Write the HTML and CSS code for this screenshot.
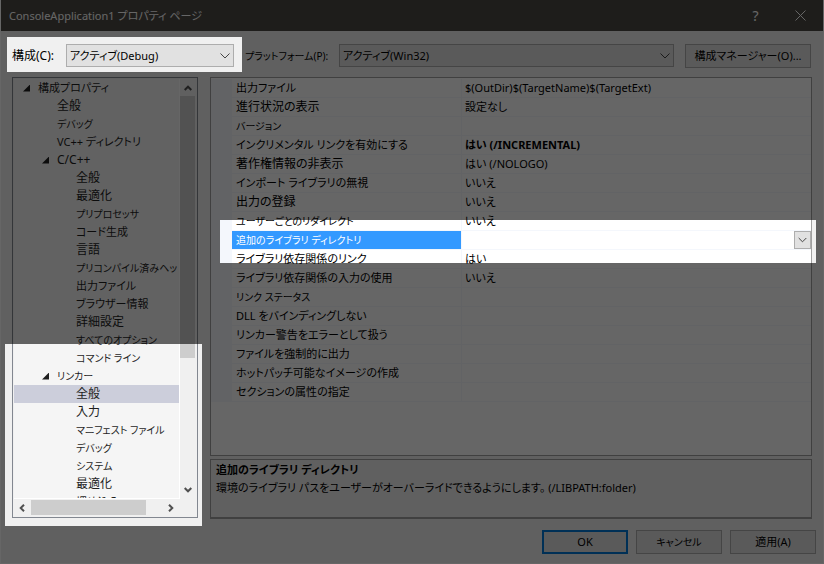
FILE: index.html
```html
<!DOCTYPE html>
<html lang="ja">
<head>
<meta charset="utf-8">
<title>ConsoleApplication1 プロパティ ページ</title>
<link rel="stylesheet" href="styles.css">
</head>
<body>
<div class="window">
  <header class="titlebar">
    <h1 class="title">ConsoleApplication1 プロパティ ページ</h1>
    <button class="caption-button" type="button" aria-label="ヘルプ">?</button>
    <button class="caption-button" type="button" aria-label="閉じる"><svg width="11" height="11" viewBox="0 0 11 11"><path d="M.5.5l10 10M10.5.5l-10 10"/></svg></button>
  </header>

  <div class="toolbar">
    <label class="config-label kanji" for="config">構成(C):</label>
    <div class="combo config-combo">
      <select id="config"><option>アクティブ(Debug)</option></select>
      <svg class="chevron" width="10" height="6" viewBox="0 0 10 6"><path d="M.5.5L5 5 9.5.5"/></svg>
    </div>
    <label class="platform-label kana" for="platform">プラットフォーム(P):</label>
    <div class="combo platform-combo">
      <select id="platform"><option>アクティブ(Win32)</option></select>
      <svg class="chevron" width="10" height="6" viewBox="0 0 10 6"><path d="M.5.5L5 5 9.5.5"/></svg>
    </div>
    <button class="button manager" type="button">構成マネージャー(O)...</button>
  </div>

  <main class="main">
    <nav class="tree-box">
      <ul class="tree">
        <li class="branch">構成プロパティ</li>
        <li class="level1 kanji">全般</li>
        <li class="level1 kana">デバッグ</li>
        <li class="level1">VC++ ディレクトリ</li>
        <li class="level1 branch kanji">C/C++</li>
        <li class="level2 kanji">全般</li>
        <li class="level2 kanji">最適化</li>
        <li class="level2 kana">プリプロセッサ</li>
        <li class="level2">コード生成</li>
        <li class="level2 kanji">言語</li>
        <li class="level2 kana">プリコンパイル済みヘッ</li>
        <li class="level2">出力ファイル</li>
        <li class="level2">ブラウザー情報</li>
        <li class="level2 kanji">詳細設定</li>
        <li class="level2 kana">すべてのオプション</li>
        <li class="level2 kana">コマンド ライン</li>
        <li class="level1 branch kana">リンカー</li>
        <li class="level2 selected kanji">全般</li>
        <li class="level2 kanji">入力</li>
        <li class="level2 kana">マニフェスト ファイル</li>
        <li class="level2 kana">デバッグ</li>
        <li class="level2 kana">システム</li>
        <li class="level2 kanji">最適化</li>
        <li class="level2">埋め込み IDL</li>
      </ul>
      <div class="scroll-y">
        <svg width="8" height="6" viewBox="0 0 8 6"><path d="M.7 5L4 1.700 7.300 5"/></svg>
        <div class="track-y"><div class="thumb-y"></div></div>
        <svg width="8" height="6" viewBox="0 0 8 6"><path d="M.7 1L4 4.300 7.300 1"/></svg>
      </div>
      <div class="scroll-x">
        <svg width="6" height="8" viewBox="0 0 6 8"><path d="M5 .7L1.700 4 5 7.300"/></svg>
        <div class="track-x"><div class="thumb-x"></div></div>
        <svg width="6" height="8" viewBox="0 0 6 8"><path d="M1 .7L4.300 4 1 7.300"/></svg>
      </div>
    </nav>

    <section class="details">
      <div class="grid-box">
        <table class="grid">
          <tbody>
            <tr><td class="gutter"></td><th scope="row">出力ファイル</th><td>$(OutDir)$(TargetName)$(TargetExt)</td></tr>
            <tr><td class="gutter"></td><th scope="row" class="kanji">進行状況の表示</th><td>設定なし</td></tr>
            <tr><td class="gutter"></td><th scope="row" class="kana">バージョン</th><td></td></tr>
            <tr><td class="gutter"></td><th scope="row">インクリメンタル リンクを有効にする</th><td class="changed">はい (/INCREMENTAL)</td></tr>
            <tr><td class="gutter"></td><th scope="row" class="kanji">著作権情報の非表示</th><td>はい (/NOLOGO)</td></tr>
            <tr><td class="gutter"></td><th scope="row">インポート ライブラリの無視</th><td>いいえ</td></tr>
            <tr><td class="gutter"></td><th scope="row" class="kanji">出力の登録</th><td>いいえ</td></tr>
            <tr><td class="gutter"></td><th scope="row" class="kana">ユーザーごとのリダイレクト</th><td>いいえ</td></tr>
            <tr class="current"><td class="gutter"></td><th scope="row" class="kana">追加のライブラリ ディレクトリ</th><td class="editor"><button class="drop" type="button" aria-label="編集"><svg class="drop-icon" width="9" height="6" viewBox="0 0 9 6"><path d="M.7 1L4.500 4.800 8.300 1"/></svg></button></td></tr>
            <tr><td class="gutter"></td><th scope="row">ライブラリ依存関係のリンク</th><td>はい</td></tr>
            <tr><td class="gutter"></td><th scope="row">ライブラリ依存関係の入力の使用</th><td>いいえ</td></tr>
            <tr><td class="gutter"></td><th scope="row" class="kana">リンク ステータス</th><td></td></tr>
            <tr><td class="gutter"></td><th scope="row">DLL をバインディングしない</th><td></td></tr>
            <tr><td class="gutter"></td><th scope="row">リンカー警告をエラーとして扱う</th><td></td></tr>
            <tr><td class="gutter"></td><th scope="row">ファイルを強制的に出力</th><td></td></tr>
            <tr><td class="gutter"></td><th scope="row">ホットパッチ可能なイメージの作成</th><td></td></tr>
            <tr><td class="gutter"></td><th scope="row">セクションの属性の指定</th><td></td></tr>
          </tbody>
        </table>
      </div>
      <div class="description">
        <h2>追加のライブラリ ディレクトリ</h2>
        <p>環境のライブラリ パスをユーザーがオーバーライドできるようにします。 (/LIBPATH:folder)</p>
      </div>
    </section>
  </main>

  <footer class="footer">
    <button class="button default" type="button">OK</button>
    <button class="button kana" type="button">キャンセル</button>
    <button class="button" type="button">適用(A)</button>
  </footer>
  <div class="shade"></div>
</div>
</body>
</html>
```
FILE: styles.css
```css
* {
  box-sizing: border-box;
}

body {
  margin: 0;
}

body,
button,
select {
  font-family: "Noto Sans", "Noto Sans CJK JP", sans-serif;
  font-size: 11px;
  font-feature-settings: "palt";
  line-height: 18px;
  color: #000;
}

.kanji {
  font-size: 12px;
}

.kana {
  font-size: 10px;
}

svg {
  flex: none;
  fill: none;
  stroke: #444;
}

.window {
  position: relative;
  display: flex;
  flex-direction: column;
  height: 100vh;
  border: 1px solid #666;
  border-top: 0;
  background: #f0f0f0;
  overflow: hidden;
}

/* Dims everything except the three highlighted areas. */
.shade {
  position: absolute;
  inset: 0 -1px -1px;
  background: rgba(0, 0, 0, 0.6);
  pointer-events: none;
  clip-path: polygon(evenodd,
    0 0, 100% 0, 100% 100%, 0 100%, 0 0,
    7px 37px, 242px 37px, 242px 72px, 7px 72px, 7px 37px, 0 0,
    5px 344px, 202px 344px, 202px 526px, 5px 526px, 5px 344px, 0 0,
    220px 220px, calc(100% - 8px) 220px, calc(100% - 8px) 263px, 220px 263px, 220px 220px, 0 0);
}

.titlebar {
  flex: none;
  display: flex;
  align-items: center;
  height: 31px;
  padding-left: 8px;
  background: #4d4a45;
}

.title {
  flex: 1;
  margin: 0;
  font-size: 11px;
  font-weight: 400;
  color: #fff;
}

.caption-button {
  display: flex;
  align-items: center;
  justify-content: center;
  width: 45px;
  height: 31px;
  padding: 0;
  border: 0;
  background: none;
  font-size: 14px;
  color: #fff;
}

.caption-button svg {
  stroke: #fff;
}

.toolbar {
  flex: none;
  display: flex;
  align-items: center;
  padding: 13px 12px 9px 11px;
}

.config-label {
  width: 54px;
}

.combo {
  position: relative;
  height: 24px;
}

.config-combo {
  width: 168px;
}

.platform-label {
  width: 105px;
  padding-left: 11px;
  white-space: nowrap;
}

.platform-combo {
  flex: 1;
}

.combo select {
  display: block;
  width: 100%;
  height: 23px;
  padding: 0 3px;
  border: 1px solid #adadad;
  border-radius: 0;
  background: #e1e1e1;
  appearance: none;
}

.chevron {
  position: absolute;
  top: 9px;
  right: 4px;
  pointer-events: none;
}

.button {
  width: 86px;
  height: 24px;
  padding: 0;
  border: 1px solid #adadad;
  background: #e1e1e1;
  white-space: nowrap;
}

.manager {
  width: 126px;
  margin-left: 11px;
}

.main {
  flex: 1;
  min-height: 0;
  display: grid;
  grid-template-columns: 186px minmax(0, 1fr);
  grid-template-rows: minmax(0, 1fr);
  gap: 12px;
  padding: 0 11px;
}

.tree-box {
  display: grid;
  grid-template-columns: minmax(0, 1fr) 15px;
  grid-template-rows: minmax(0, 1fr) 15px;
  gap: 1px;
  margin-bottom: 1px;
  padding: 1px 2px 2px 1px;
  border: 1px solid #828790;
  background: #f0f0f0;
}

.tree {
  margin: 0;
  padding: 0;
  border-bottom: 1px solid #fff;
  background: #f5f5f5;
  box-shadow: 1px 0 #fff;
  list-style: none;
  color: #1e1e1e;
  overflow: hidden;
}

.tree li {
  display: flex;
  align-items: center;
  height: 18px;
  padding-left: 24px;
  white-space: nowrap;
}

.tree .level1 {
  padding-left: 43px;
}

.tree .level2 {
  padding-left: 62px;
}

.tree .selected {
  background: #cccedb;
}

.branch::before {
  content: "";
  width: 7px;
  height: 7px;
  margin: 0 8px 0 -15px;
  background: #1e1e1e;
  clip-path: polygon(100% 0, 100% 100%, 0 100%);
}

.scroll-y,
.scroll-x {
  display: flex;
  align-items: center;
}

.scroll-y {
  flex-direction: column;
  padding: 6px 0;
}

.scroll-x {
  padding: 0 5px;
}

.scroll-y svg,
.scroll-x svg {
  stroke: #505050;
  stroke-width: 2;
}

.track-y,
.track-x {
  flex: 1;
  display: flex;
}

.track-y {
  width: 100%;
  margin: 5px 0;
}

.thumb-y {
  width: 100%;
  height: 68%;
  background: #cdcdcd;
}

.track-x {
  height: 100%;
  margin: 0 6px;
}

.thumb-x {
  width: 88%;
  background: #cdcdcd;
}

.details {
  display: flex;
  flex-direction: column;
  gap: 3px;
  min-height: 0;
}

.grid-box {
  flex: 1;
  min-height: 0;
  padding-top: 1px;
  border: 1px solid #a0a0a0;
  background: #fff;
  overflow: hidden;
}

.grid {
  width: 100%;
  border-spacing: 0;
  table-layout: fixed;
}

.grid th,
.grid td {
  height: 19px;
  padding: 0 0 0 3px;
  border-bottom: 1px solid #f4f7fc;
  font-weight: 400;
  text-align: left;
  white-space: nowrap;
}

.grid th {
  width: 230px;
  padding-left: 4px;
  border-right: 1px solid #f4f7fc;
}

.grid .gutter {
  width: 21px;
  padding: 0;
  background: #f4f7fc;
}

.grid .changed {
  font-weight: 700;
}

.current th {
  background: #3399ff;
  background-clip: padding-box;
  color: #fff;
}

.drop {
  display: flex;
  align-items: center;
  justify-content: center;
  width: 17px;
  height: 18px;
  margin-left: auto;
  padding: 0;
  border: 1px solid #adadad;
  background: #e1e1e1;
}

.description {
  flex: none;
  height: 60px;
  padding: 1px 5px;
  border: 1px solid #a0a0a0;
  border-bottom-width: 2px;
}

.description h2,
.description p {
  margin: 0;
  font-size: 11px;
  line-height: 18px;
}

.description h2 {
  font-weight: 600;
}

.footer {
  flex: none;
  display: flex;
  justify-content: flex-end;
  gap: 8px;
  padding: 11px 7px 9px;
}

.default {
  border: 2px solid #0078d7;
}
```
